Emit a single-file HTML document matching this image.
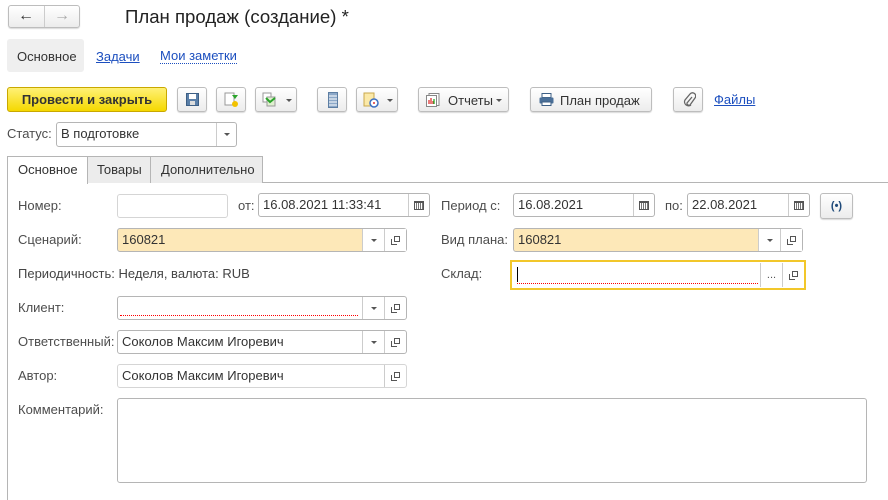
<!DOCTYPE html>
<html><head><meta charset="utf-8"><style>
*{box-sizing:border-box;margin:0;padding:0}
body{width:888px;height:500px;background:#fff;font-family:"Liberation Sans",Arial,sans-serif;font-size:13px;color:#333;position:relative;overflow:hidden}
.a{position:absolute}
.btn{position:absolute;border:1px solid #bdbdbd;border-radius:3px;background:linear-gradient(#fff,#ececec);box-shadow:0 1px 1px rgba(0,0,0,.15)}
.lbl{position:absolute;color:#4d4d4d;line-height:16px}
.inp{position:absolute;border:1px solid #b5b5b5;border-radius:3px;background:#fff;height:24px;line-height:22px;padding-left:4px;color:#333}
.org{background:#fde8b8}
.sb{position:absolute;top:0;bottom:0;width:22px;border-left:1px solid #ccc;display:flex;align-items:center;justify-content:center;color:#555;font-size:9px}
.dd:after{content:"";border-left:3px solid transparent;border-right:3px solid transparent;border-top:3px solid #555}
.cp{width:9px;height:9px;position:relative}
.cp:before{content:"";position:absolute;left:3px;top:0;width:6px;height:6px;border:1px solid #555;box-sizing:border-box}
.cp:after{content:"";position:absolute;left:0;top:3px;width:6px;height:6px;border-left:1px solid #555;border-bottom:1px solid #555;box-sizing:border-box}
.cal{width:10px;height:9px;border:1px solid #555;border-top-width:2px;background:repeating-linear-gradient(90deg,#fff 0 1px,#777 1px 2px)}
.red{position:absolute;left:2px;right:48px;bottom:3px;border-bottom:1px dotted #f00}
.dda{display:inline-block;border-left:3px solid transparent;border-right:3px solid transparent;border-top:3px solid #555;vertical-align:middle}
</style></head><body>
<div class="btn" style="left:8px;top:5px;width:72px;height:23px"></div>
<div class="a" style="left:44px;top:6px;width:1px;height:21px;background:#ccc"></div>
<div class="a" style="left:18px;top:7px;font-size:16px;color:#333;font-weight:bold">&#8592;</div>
<div class="a" style="left:54px;top:7px;font-size:16px;color:#aaa;font-weight:bold">&#8594;</div>
<div class="a" style="left:125px;top:6px;font-size:18.6px;color:#222">План продаж (создание) *</div>
<div class="a" style="left:7px;top:39px;width:77px;height:33px;background:#efefef;border-radius:3px"></div>
<div class="a" style="left:17px;top:49px;color:#333">Основное</div>
<div class="a" style="left:96px;top:49px;color:#1c4fbf;text-decoration:underline">Задачи</div>
<div class="a" style="left:160px;top:49px;color:#1c4fbf;border-bottom:1px dotted #1c4fbf;line-height:14px">Мои заметки</div>
<div class="a" style="left:7px;top:87px;width:160px;height:25px;border:1px solid #c9a800;border-radius:3px;background:linear-gradient(#fff176,#f5d800);font-weight:bold;color:#333;text-align:center;line-height:23px;font-size:13px">Провести и закрыть</div>
<div class="btn" style="left:177px;top:87px;width:30px;height:25px"><svg class="a" style="left:8px;top:5px" width="13" height="13"><rect x=".5" y=".5" width="12" height="12" fill="#5a7fa8" stroke="#3d5f85"/><rect x="3" y="1" width="7" height="5" fill="#fff"/><rect x="4" y="8" width="5" height="4" fill="#ddd"/></svg></div>
<div class="btn" style="left:216px;top:87px;width:30px;height:25px"><svg class="a" style="left:7px;top:4px" width="16" height="16"><rect x="1" y="1" width="9" height="12" fill="#fff" stroke="#999"/><path d="M8 3h6l-3 4z" fill="#2aa42a"/><ellipse cx="11" cy="12" rx="3" ry="3" fill="#f2c200"/></svg></div>
<div class="btn" style="left:255px;top:87px;width:42px;height:25px"><svg class="a" style="left:6px;top:4px" width="16" height="16"><rect x="1" y="1" width="8" height="9" fill="#fff" stroke="#999"/><rect x="5" y="5" width="8" height="9" fill="#e0f0d0" stroke="#999"/><path d="M4 6l4 4 5-4" stroke="#2aa42a" stroke-width="2" fill="none"/></svg><span class="a dda" style="left:30px;top:11px"></span></div>
<div class="btn" style="left:317px;top:87px;width:30px;height:25px"><svg class="a" style="left:10px;top:4px" width="10" height="16"><rect x=".5" y=".5" width="9" height="15" fill="#8ca8c8" stroke="#5d7ea3"/><path d="M1 4h8M1 7h8M1 10h8M1 13h8" stroke="#fff"/></svg></div>
<div class="btn" style="left:356px;top:87px;width:42px;height:25px"><svg class="a" style="left:6px;top:4px" width="16" height="16"><rect x="1" y="1" width="10" height="13" fill="#fbe9a8" stroke="#c9a84d"/><circle cx="11" cy="11" r="4" fill="#fff" stroke="#3b6fc2" stroke-width="1.5"/><circle cx="11" cy="11" r="1" fill="#d33"/></svg><span class="a dda" style="left:30px;top:11px"></span></div>
<div class="btn" style="left:418px;top:87px;width:91px;height:25px"><svg class="a" style="left:7px;top:5px" width="14" height="14"><rect x="3" y=".5" width="10" height="12" fill="#fff" stroke="#888"/><rect x=".5" y="2.5" width="10" height="11" fill="#fff" stroke="#888"/><path d="M3 11V7M5 11V5M7 11V8" stroke="#d33" stroke-width="1.3"/><path d="M8 11V6" stroke="#2a2" stroke-width="1.3"/></svg><span class="a" style="left:29px;top:5px">Отчеты</span><span class="a dda" style="left:77px;top:11px"></span></div>
<div class="btn" style="left:530px;top:87px;width:122px;height:25px"><svg class="a" style="left:8px;top:5px" width="15" height="13"><rect x="3" y=".5" width="9" height="4" fill="#fff" stroke="#3d5f85"/><rect x=".5" y="4.5" width="14" height="6" rx="1" fill="#4a6f98"/><rect x="3" y="9" width="9" height="3.5" fill="#fff" stroke="#3d5f85"/></svg><span class="a" style="left:29px;top:5px">План продаж</span></div>
<div class="btn" style="left:673px;top:87px;width:30px;height:25px"><svg class="a" style="left:8px;top:4px" width="14" height="16"><path d="M10 5l-5 6a2 2 0 0 0 3 2l5-7a3.2 3.2 0 0 0-5-4L3 8a4 4 0 0 0 6 5" stroke="#666" stroke-width="1.3" fill="none"/></svg></div>
<div class="a" style="left:714px;top:92px;color:#1c4fbf;text-decoration:underline">Файлы</div>
<div class="lbl" style="left:7px;top:126px">Статус:</div>
<div class="inp" style="left:56px;top:122px;width:181px;height:25px">В подготовке<div class="sb dd" style="right:0;width:20px"></div></div>
<div class="a" style="left:7px;top:182px;width:881px;height:1px;background:#b5b5b5"></div>
<div class="a" style="left:7px;top:182px;width:1px;height:318px;background:#b5b5b5"></div>
<div class="a" style="left:87px;top:156px;width:64px;height:27px;background:#ececec;border:1px solid #b5b5b5;border-bottom:none"></div>
<div class="a" style="left:151px;top:156px;width:112px;height:27px;background:#ececec;border:1px solid #b5b5b5;border-left:none;border-bottom:none"></div>
<div class="a" style="left:7px;top:156px;width:81px;height:28px;background:#fff;border:1px solid #b5b5b5;border-bottom:none"></div>
<div class="a" style="left:18px;top:162px">Основное</div>
<div class="a" style="left:97px;top:162px">Товары</div>
<div class="a" style="left:161px;top:162px">Дополнительно</div>
<div class="lbl" style="left:18px;top:198px">Номер:</div>
<div class="inp" style="left:117px;top:194px;width:111px;border-color:#d5d5d5"></div>
<div class="lbl" style="left:238px;top:198px">от:</div>
<div class="inp" style="left:258px;top:193px;width:172px">16.08.2021 11:33:41<div class="sb" style="right:0;width:21px"><div class="cal"></div></div></div>
<div class="lbl" style="left:441px;top:198px">Период с:</div>
<div class="inp" style="left:513px;top:193px;width:142px">16.08.2021<div class="sb" style="right:0;width:21px"><div class="cal"></div></div></div>
<div class="lbl" style="left:665px;top:198px">по:</div>
<div class="inp" style="left:687px;top:193px;width:123px">22.08.2021<div class="sb" style="right:0;width:21px"><div class="cal"></div></div></div>
<div class="btn" style="left:820px;top:193px;width:33px;height:26px;text-align:center;line-height:24px;font-weight:bold;color:#1f4a7a;font-size:11px">(•)</div>
<div class="lbl" style="left:18px;top:232px">Сценарий:</div>
<div class="inp org" style="left:117px;top:228px;width:290px">160821<div class="sb dd" style="right:22px;background:#fff"></div><div class="sb" style="right:0;background:#fff"><div class="cp"></div></div></div>
<div class="lbl" style="left:441px;top:232px">Вид плана:</div>
<div class="inp org" style="left:513px;top:228px;width:290px">160821<div class="sb dd" style="right:22px;background:#fff"></div><div class="sb" style="right:0;background:#fff"><div class="cp"></div></div></div>
<div class="lbl" style="left:18px;top:266px;color:#444">Периодичность: Неделя, валюта: RUB</div>
<div class="lbl" style="left:441px;top:266px">Склад:</div>
<div class="a" style="left:510px;top:260px;width:296px;height:30px;border:2px solid #f2c72a"></div>
<div class="a" style="left:512px;top:262px;width:292px;height:26px;background:#fff"><div class="a" style="left:5px;top:5px;width:1px;height:15px;background:#000"></div><div class="a" style="left:5px;right:46px;bottom:4px;border-bottom:1px dotted #f00"></div><div class="sb" style="right:22px;top:1px;bottom:1px;font-size:11px">...</div><div class="sb" style="right:0;top:1px;bottom:1px"><div class="cp"></div></div></div>
<div class="lbl" style="left:18px;top:300px">Клиент:</div>
<div class="inp" style="left:117px;top:296px;width:290px"><div class="red"></div><div class="sb dd" style="right:22px"></div><div class="sb" style="right:0"><div class="cp"></div></div></div>
<div class="lbl" style="left:18px;top:334px">Ответственный:</div>
<div class="inp" style="left:117px;top:330px;width:290px">Соколов Максим Игоревич<div class="sb dd" style="right:22px"></div><div class="sb" style="right:0"><div class="cp"></div></div></div>
<div class="lbl" style="left:18px;top:368px">Автор:</div>
<div class="inp" style="left:117px;top:364px;width:290px;border-color:#d5d5d5">Соколов Максим Игоревич<div class="sb" style="right:0"><div class="cp"></div></div></div>
<div class="lbl" style="left:18px;top:402px">Комментарий:</div>
<div class="inp" style="left:117px;top:398px;width:750px;height:85px"></div>
</body></html>
